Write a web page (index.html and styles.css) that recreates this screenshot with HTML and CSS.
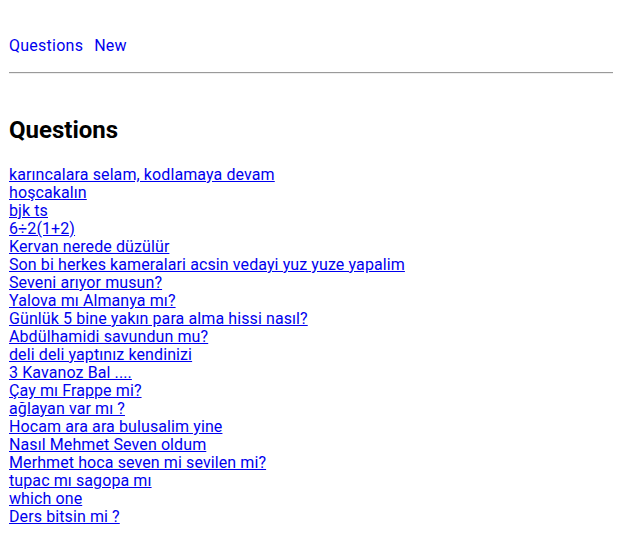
FILE: index.html
```html
<!DOCTYPE html>
<html lang="tr">
<head>
<meta charset="utf-8">
<title>Questions</title>
<link rel="stylesheet" href="styles.css">
</head>
<body>
<nav class="nav">
  <a class="nav-link" href="#">Questions</a>
  <a class="nav-link" href="#">New</a>
</nav>
<hr class="divider">
<h2 class="title">Questions</h2>
<div class="list">
  <a class="item" href="#">karıncalara selam, kodlamaya devam</a>
  <a class="item" href="#">hoşcakalın</a>
  <a class="item" href="#">bjk ts</a>
  <a class="item" href="#">6÷2(1+2)</a>
  <a class="item" href="#">Kervan nerede düzülür</a>
  <a class="item" href="#">Son bi herkes kameralari acsin vedayi yuz yuze yapalim</a>
  <a class="item" href="#">Seveni arıyor musun?</a>
  <a class="item" href="#">Yalova mı Almanya mı?</a>
  <a class="item" href="#">Günlük 5 bine yakın para alma hissi nasıl?</a>
  <a class="item" href="#">Abdülhamidi savundun mu?</a>
  <a class="item" href="#">deli deli yaptınız kendinizi</a>
  <a class="item" href="#">3 Kavanoz Bal ....</a>
  <a class="item" href="#">Çay mı Frappe mi?</a>
  <a class="item" href="#">ağlayan var mı ?</a>
  <a class="item" href="#">Hocam ara ara bulusalim yine</a>
  <a class="item" href="#">Nasıl Mehmet Seven oldum</a>
  <a class="item" href="#">Merhmet hoca seven mi sevilen mi?</a>
  <a class="item" href="#">tupac mı sagopa mı</a>
  <a class="item" href="#">which one</a>
  <a class="item" href="#">Ders bitsin mi ?</a>
</div>
</body>
</html>
```
FILE: styles.css
```css
body {
  margin: 0;
  padding: 8px;
  font-family: Roboto, "Noto Sans", sans-serif;
  font-size: 16px;
  line-height: 18px;
  color: #000;
  background: #fff;
}

.nav {
  display: flex;
  gap: 11px;
  margin-top: 29px;
  padding-left: 1px;
  height: 18px;
}

.nav-link {
  color: #0000ee;
  text-decoration: none;
  letter-spacing: 0.25px;
}

.divider {
  margin: 17px 1px 0 1px;
  height: 0;
  border: 0;
  border-top: 1px solid #9a9a9a;
  border-bottom: 1px solid #eeeeee;
}

.title {
  margin: 42px 0 0;
  padding-left: 1px;
  font-size: 24px;
  line-height: 28px;
  font-weight: 700;
}

.list {
  display: flex;
  flex-direction: column;
  align-items: flex-start;
  margin-top: 22px;
  padding-left: 1px;
}

.item {
  color: #0000ee;
  text-decoration: underline;
  letter-spacing: 0.1px;
}
```
